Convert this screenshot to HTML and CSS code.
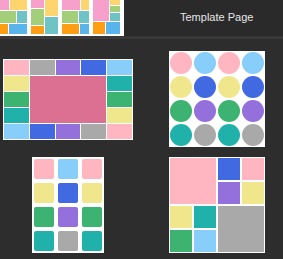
FILE: index.html
```html
<!DOCTYPE html>
<html lang="en">
<head>
  <meta charset="UTF-8">
  <title>Template Page</title>
  <link rel="stylesheet" href="styles.css">
</head>
<body>
  <header class="topbar">
    <div class="strip">
      <div class="thumb rows">
        <div class="row r1"><i class="pk w9"></i><i class="ye grow"></i></div>
        <div class="row r2"><i class="gr w16"></i><i class="tl grow"></i></div>
        <div class="row r3"><i class="or w8"></i><i class="bl grow"></i></div>
      </div>
      <div class="thumb cols">
        <div class="col"><i class="pk h8"></i><i class="gr h16"></i><i class="or grow"></i></div>
        <div class="col"><i class="ye h16"></i><i class="tl grow"></i></div>
      </div>
      <div class="thumb rows">
        <div class="row r1"><i class="pk w18"></i><i class="ye grow"></i></div>
        <div class="row r2"><i class="gr w16"></i><i class="tl grow"></i></div>
        <div class="row r3"><i class="or w17"></i><i class="bl grow"></i></div>
      </div>
      <div class="thumb rows">
        <div class="row r4">
          <i class="pk w16"></i>
          <div class="col"><i class="ye h5"></i><i class="gr h6"></i><i class="tl grow"></i></div>
        </div>
        <div class="row grow"><i class="or w12"></i><i class="bl grow"></i></div>
      </div>
    </div>
    <h1 class="title">Template Page</h1>
  </header>

  <main class="layouts">
    <div class="card frame">
      <i class="pink"></i><i class="gray"></i><i class="purple"></i><i class="blue"></i><i class="sky"></i>
      <i class="yellow"></i><i class="center"></i><i class="teal"></i>
      <i class="green"></i><i class="green"></i>
      <i class="teal"></i><i class="yellow"></i>
      <i class="sky"></i><i class="blue"></i><i class="purple"></i><i class="gray"></i><i class="pink"></i>
    </div>

    <div class="card dots">
      <i class="pink"></i><i class="sky"></i><i class="pink"></i><i class="sky"></i>
      <i class="yellow"></i><i class="blue"></i><i class="yellow"></i><i class="blue"></i>
      <i class="green"></i><i class="purple"></i><i class="green"></i><i class="purple"></i>
      <i class="teal"></i><i class="gray"></i><i class="teal"></i><i class="gray"></i>
    </div>

    <div class="card tiles">
      <i class="pink"></i><i class="sky"></i><i class="pink"></i>
      <i class="yellow"></i><i class="blue"></i><i class="yellow"></i>
      <i class="green"></i><i class="purple"></i><i class="green"></i>
      <i class="teal"></i><i class="gray"></i><i class="teal"></i>
    </div>

    <div class="card mosaic">
      <i class="pink big"></i><i class="blue"></i><i class="pink"></i>
      <i class="purple"></i><i class="yellow"></i>
      <i class="yellow"></i><i class="teal"></i><i class="gray big"></i>
      <i class="green"></i><i class="sky"></i>
    </div>
  </main>
</body>
</html>
```

FILE: styles.css
```css
body {
  margin: 0;
  background-color: #2d2d2d;
  font-family: "Liberation Sans", Arial, sans-serif;
  overflow: hidden;
}

i {
  display: block;
}

/* top bar with template thumbnails */
.topbar {
  display: flex;
  height: 36px;
  background-color: #2a2a2a;
  border-bottom: 3px solid #383838;
}

.strip {
  display: flex;
  gap: 4px;
  width: 121px;
  padding: 0 3px 2px 0;
  background-color: #ffffff;
}

.thumb {
  width: 27px;
  display: flex;
  gap: 1px;
}

.thumb.rows {
  flex-direction: column;
}

.row {
  display: flex;
  gap: 1px;
}

.col {
  display: flex;
  flex-direction: column;
  gap: 1px;
  flex: 1;
}

.r1 { height: 10px; }
.r2 { height: 12px; }
.r3 { flex: 1; }
.r4 { height: 21px; }

.grow { flex: 1; }
.w8 { width: 8px; }
.w9 { width: 9px; }
.w12 { width: 12px; }
.w16 { width: 16px; }
.w17 { width: 17px; }
.w18 { width: 18px; }
.h5 { height: 5px; }
.h6 { height: 6px; }
.h8 { height: 8px; }
.h16 { height: 16px; }

.pk { background-color: #f8a0cc; }
.ye { background-color: #fdd46e; }
.gr { background-color: #a4cf7a; }
.tl { background-color: #6ec4c4; }
.or { background-color: #ff9d14; }
.bl { background-color: #5ab4ec; }

.title {
  margin: 0 0 0 56px;
  padding-top: 11px;
  font-size: 11px;
  font-weight: normal;
  color: #e6e6e6;
}

/* layout cards */
.layouts {
  display: grid;
  grid-template-columns: 136px 130px;
  grid-template-rows: 96px 96px;
  column-gap: 16px;
  row-gap: 10px;
  padding-top: 12px;
  justify-items: center;
  align-items: center;
}

.card {
  display: grid;
  background-color: #ffffff;
}

.frame {
  width: 128px;
  height: 79px;
  padding: 1px;
  gap: 1px;
  grid-template-columns: repeat(5, 1fr);
  grid-template-rows: repeat(5, 1fr);
}

.frame .center {
  grid-column: 2 / 5;
  grid-row: 2 / 5;
}

.dots {
  padding: 1px;
  gap: 2px;
  grid-template-columns: repeat(4, 22px);
  grid-template-rows: repeat(4, 22px);
}

.dots i {
  border-radius: 50%;
}

.tiles {
  padding: 2px;
  gap: 4px;
  grid-template-columns: repeat(3, 20px);
  grid-template-rows: repeat(4, 20px);
}

.tiles i {
  border-radius: 2px;
}

.mosaic {
  padding: 1px;
  gap: 2px;
  grid-template-columns: repeat(4, 22px);
  grid-template-rows: repeat(4, 22px);
}

.mosaic .big {
  grid-column: span 2;
  grid-row: span 2;
}

.pink { background-color: #ffb6c1; }
.sky { background-color: #87cefa; }
.yellow { background-color: #f0e68c; }
.blue { background-color: #4169e1; }
.green { background-color: #3cb371; }
.purple { background-color: #9370db; }
.teal { background-color: #20b2aa; }
.gray { background-color: #a9a9a9; }
.center { background-color: #db7093; }
```
